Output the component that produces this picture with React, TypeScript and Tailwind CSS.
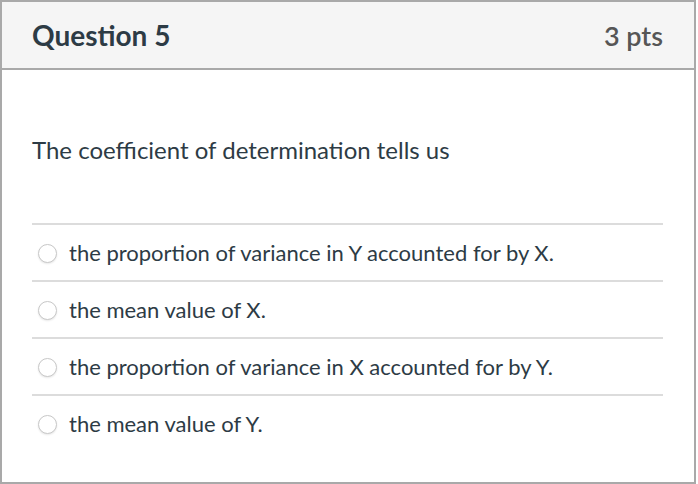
const answers = [
  'the proportion of variance in Y accounted for by X.',
  'the mean value of X.',
  'the proportion of variance in X accounted for by Y.',
  'the mean value of Y.',
];

export default function App() {
  return (
    <div className="w-[698px] h-[484px] bg-white" style={{ fontFamily: 'Lato, "Noto Sans", sans-serif' }}>
      <div className="w-[696px] h-[484px] border-2 border-[#a9a9a9] flex flex-col">
        <div className="h-[68px] bg-[#f5f5f5] border-b-2 border-[#a9a9a9] flex items-center justify-between pl-[30px] pr-[31px]">
          <h2 className="text-[28px] font-bold text-[#2d3b45] leading-none">Question 5</h2>
          <span className="text-[27px] font-semibold text-[#565656] leading-none">3 pts</span>
        </div>
        <div className="pl-[30px] pr-[31px] pt-[66px]">
          <p className="text-[24px] text-[#2d3b45] leading-[28px]">The coefficient of determination tells us</p>
          <ul className="mt-[59px]">
            {answers.map((a) => (
              <li key={a} className="border-t-2 border-[#dcdcdc] h-[57px] flex items-center">
                <span className="ml-[6px] mt-[2px] w-[19px] h-[19px] rounded-full border border-[#c8c8c8] bg-white shadow-[0_1px_2px_rgba(0,0,0,0.1)]" />
                <span className="ml-[12px] text-[22px] text-[#2d3b45]">{a}</span>
              </li>
            ))}
          </ul>
        </div>
      </div>
    </div>
  );
}
